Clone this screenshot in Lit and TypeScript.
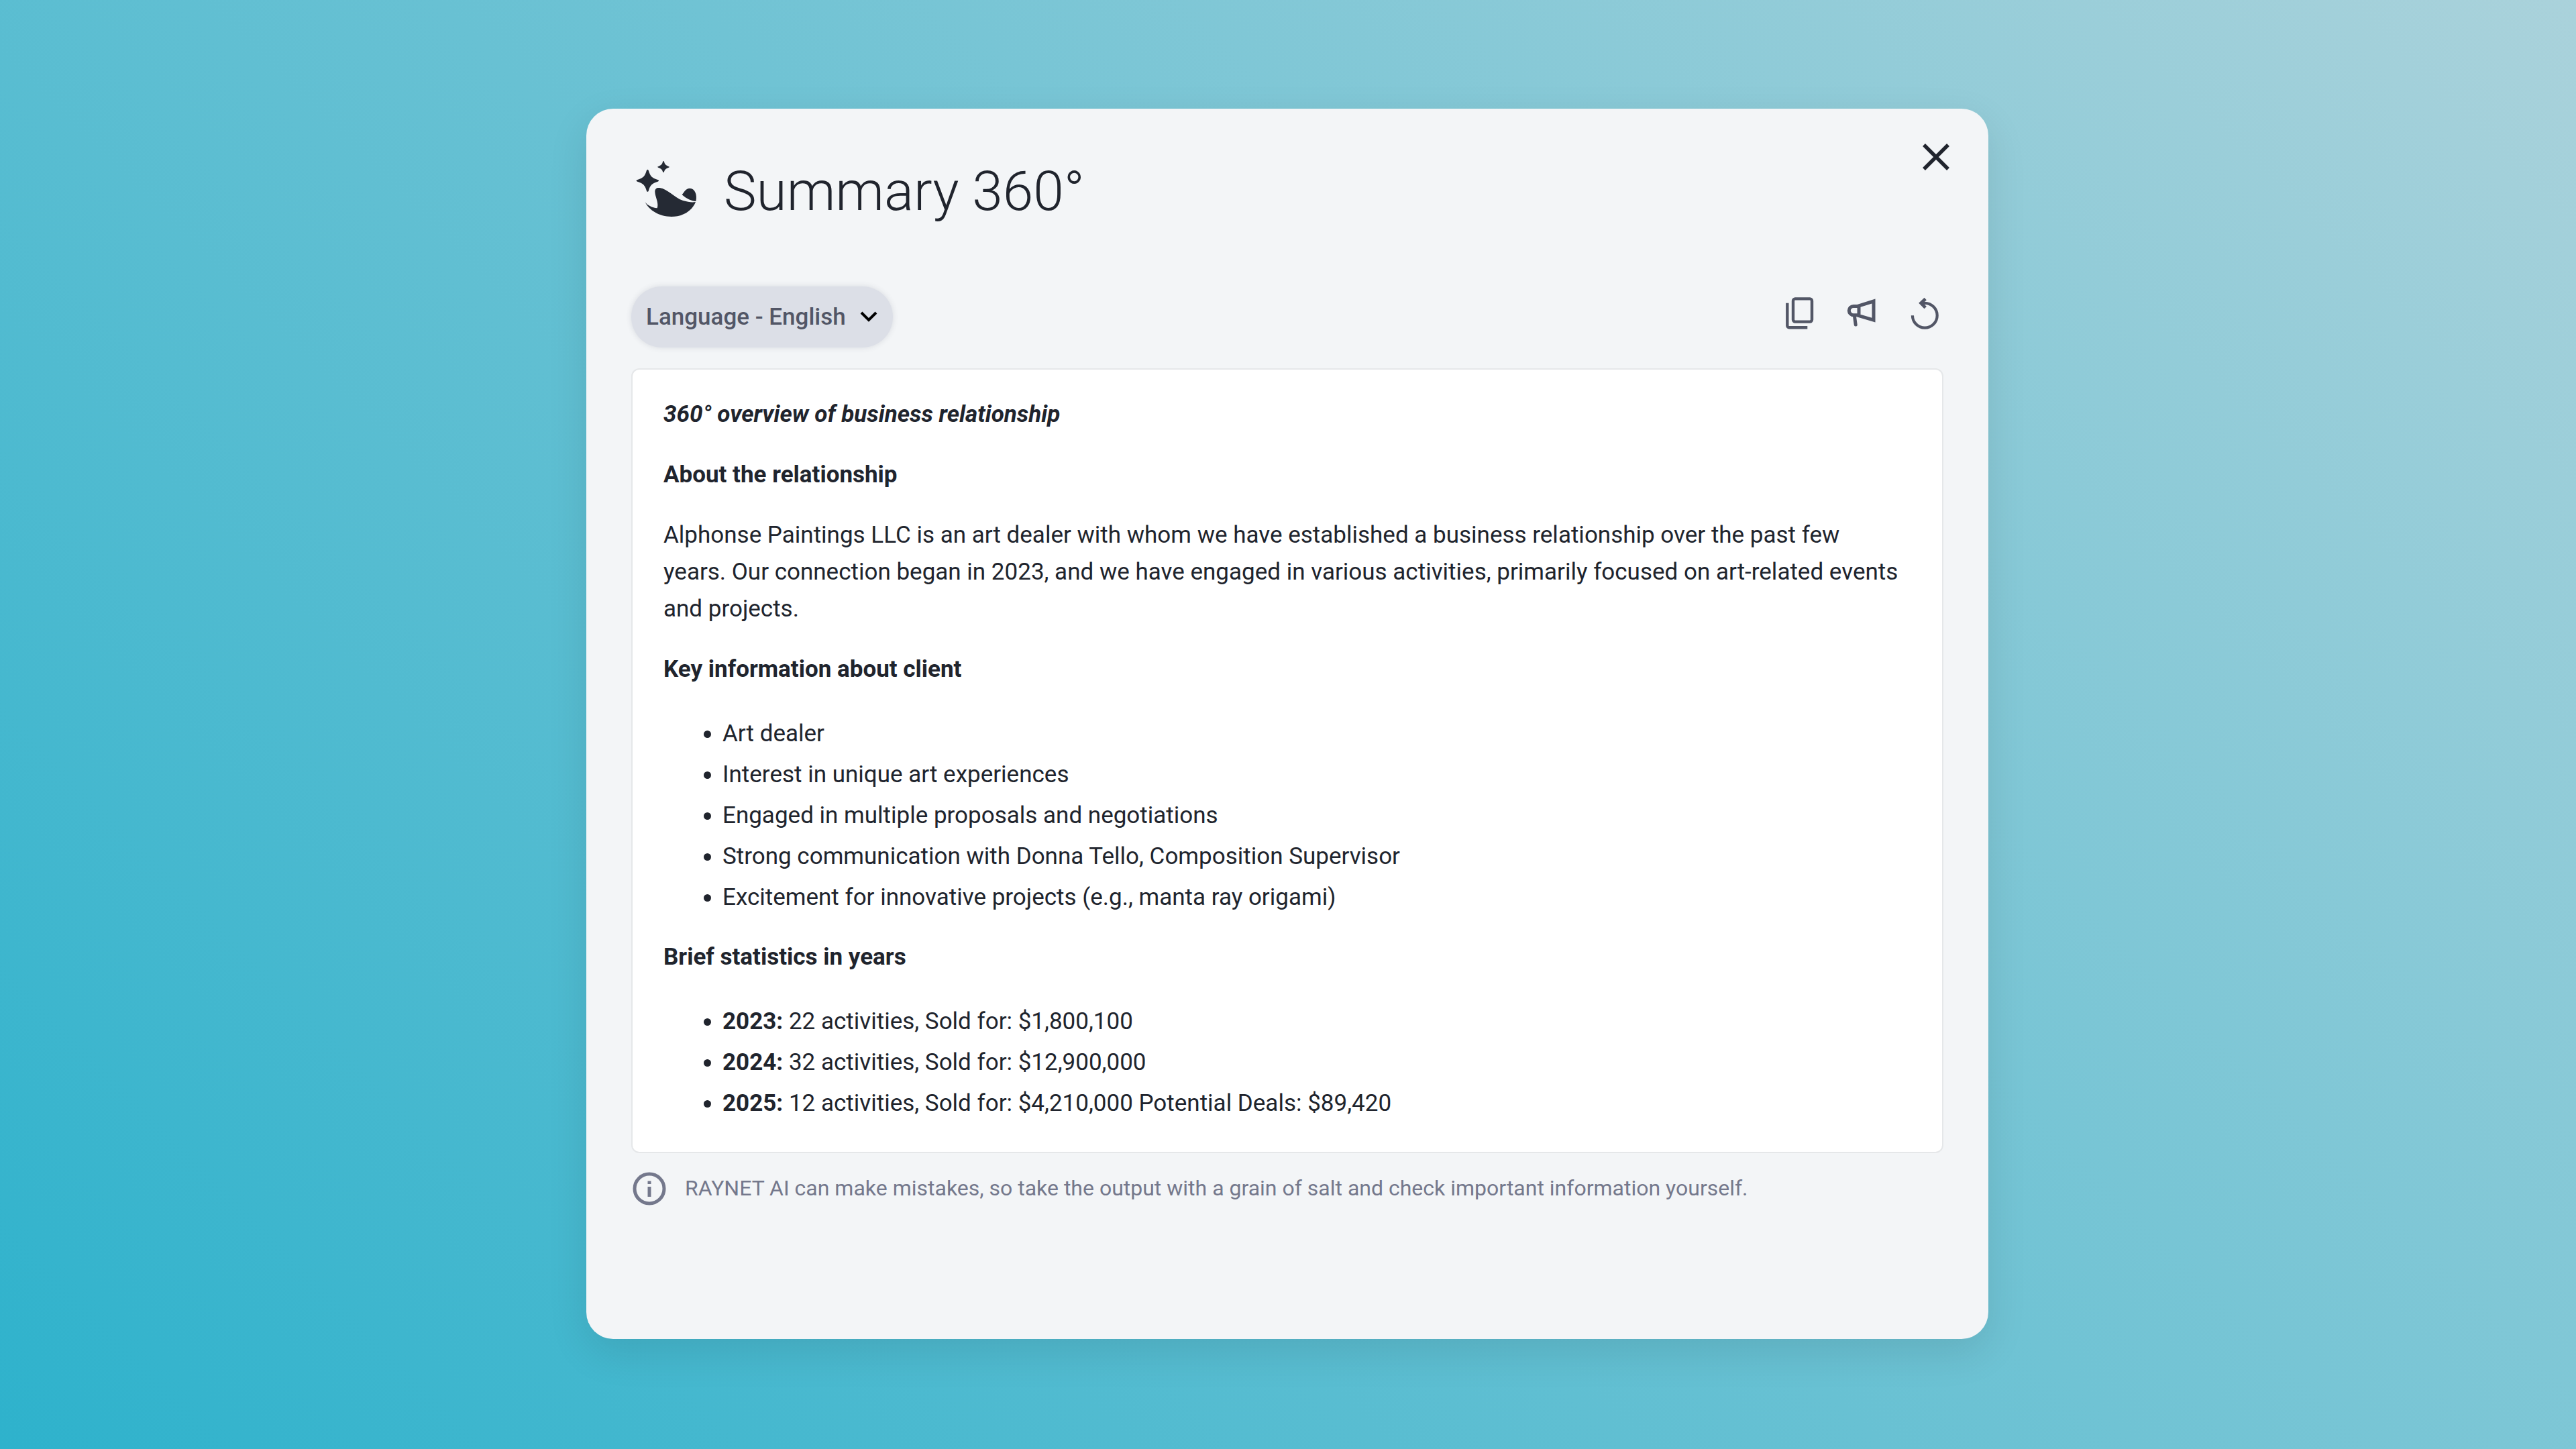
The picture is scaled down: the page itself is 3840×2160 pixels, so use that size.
import { LitElement, html, css, svg } from "lit";
import { customElement, property } from "lit/decorators.js";

const glyphs = {
  close: svg`<path d="M10 10 46 46M46 10 10 46" stroke-width="5.4" />`,
  copy: svg`<rect x="20" y="6.4" width="28" height="34.2" rx="3" stroke-width="4.4" />
    <path d="M11.3 12.7V46.6a2.6 2.6 0 0 0 2.6 2.6H41.3" stroke-width="4.4" />`,
  megaphone: svg`<path d="M46 10 V38.2 L24 31.6 V16.8 Z" stroke-width="5" />
    <path d="M24 17.4H16a6.7 6.7 0 0 0 0 13.4h8" stroke-width="5" />
    <path d="M17.4 32 19.2 45" stroke-width="5" stroke-linecap="round" />`,
  refresh: svg`<path d="M9.9 31.2A18.4 18.4 0 1 0 28.3 12.8H23" stroke-width="4.2" />
    <path d="M29.2 6.6 22.6 12.8 29.2 19.6" stroke-width="4.8" />`,
};

@customElement("icon-button")
class IconButton extends LitElement {
  @property() icon: keyof typeof glyphs = "close";
  @property() label = "";

  static styles = css`
    :host {
      display: block;
    }
    .button {
      display: block;
      padding: 0;
      border: 0;
      background: none;
      color: inherit;
      cursor: pointer;
    }
    .glyph {
      display: block;
      width: 56px;
      height: 56px;
      fill: none;
      stroke: currentColor;
    }
  `;

  render() {
    return html`<button class="button" type="button" aria-label=${this.label}>
      <svg class="glyph" viewBox="0 0 56 56" aria-hidden="true">${glyphs[this.icon]}</svg>
    </button>`;
  }
}

@customElement("app-root")
class AppRoot extends LitElement {
  private facts = [
    "Art dealer",
    "Interest in unique art experiences",
    "Engaged in multiple proposals and negotiations",
    "Strong communication with Donna Tello, Composition Supervisor",
    "Excitement for innovative projects (e.g., manta ray origami)",
  ];

  private years = [
    { year: "2023", text: "22 activities, Sold for: $1,800,100" },
    { year: "2024", text: "32 activities, Sold for: $12,900,000" },
    { year: "2025", text: "12 activities, Sold for: $4,210,000 Potential Deals: $89,420" },
  ];

  static styles = css`
    :host {
      display: flex;
      align-items: center;
      justify-content: center;
      box-sizing: border-box;
      min-height: 100vh;
      padding: 40px 42px 42px 40px;
      background: linear-gradient(45deg, #2eb2cc, #aad2db);
      font-family: Roboto, "Liberation Sans", sans-serif;
      font-size: 35px;
      line-height: 55px;
      color: #20242d;
    }
    .card {
      flex: 0 1 2090px;
      min-width: 0;
      border-radius: 40px;
      background: #f3f5f7;
      box-shadow: 0 20px 60px rgba(0, 0, 0, 0.1);
    }
    .header {
      display: flex;
      align-items: flex-start;
      justify-content: space-between;
      padding: 44px 50px 0 73px;
    }
    .brand {
      display: flex;
      align-items: flex-start;
      gap: 38px;
      padding-top: 32px;
    }
    .logo {
      flex: none;
      width: 94px;
      height: 88px;
      fill: #252a34;
    }
    .title {
      margin: 0;
      font-size: 82px;
      font-weight: 300;
      line-height: 94px;
    }
    .body {
      padding: 95px 67px 197px;
    }
    .toolbar {
      display: flex;
      align-items: flex-start;
      justify-content: space-between;
    }
    .language {
      display: grid;
      align-items: center;
      border-radius: 46px;
      background: #dcdfe7;
      box-shadow: 0 0 8px rgba(60, 66, 84, 0.14);
    }
    .language-select {
      grid-area: 1 / 1;
      height: 91px;
      padding: 0 70px 0 22px;
      border: 0;
      border-radius: 46px;
      appearance: none;
      background: none;
      font: inherit;
      font-weight: 500;
      color: #525666;
    }
    .chevron {
      grid-area: 1 / 1;
      justify-self: end;
      width: 32px;
      height: 24px;
      margin-right: 20px;
      fill: none;
      stroke: #000;
      stroke-width: 4;
      pointer-events: none;
    }
    .actions {
      display: flex;
      gap: 38px;
      padding-top: 12px;
      color: #525666;
    }
    .report {
      margin-top: 31px;
      padding: 39px 60px 45px 46px;
      border: 2px solid #e5e7e9;
      border-radius: 12px;
      background: #fff;
    }
    .heading,
    .paragraph {
      margin: 0 0 35px;
      font-size: 35px;
      font-weight: 400;
    }
    .heading {
      font-weight: 700;
    }
    .overview {
      font-style: italic;
    }
    .list {
      margin: 0 0 34px;
      padding-left: 88px;
    }
    .list:last-child {
      margin-bottom: 0;
    }
    .item {
      padding-top: 6px;
    }
    .note {
      display: flex;
      align-items: center;
      gap: 26px;
      margin: 25px 0 0;
      font-size: 32px;
      color: #74788c;
    }
    .info {
      flex: none;
      width: 54px;
      height: 54px;
      fill: none;
      stroke: currentColor;
      stroke-width: 5;
    }
  `;

  render() {
    return html`
      <main class="card" role="dialog" aria-labelledby="title">
        <header class="header">
          <div class="brand">
            <svg class="logo" viewBox="51 54 282 264" aria-hidden="true">
              <path d="M106 98c3 0 4 3 5 6 6 22 15 32 38 39 4 1 7 2 7 5s-3 4-7 5c-23 7-32 17-38 38-1 4-2 6-5 6s-4-2-5-6c-6-21-15-31-38-38-4-1-7-2-7-5s3-4 7-5c23-7 32-17 38-39 1-3 2-6 5-6z" />
              <path d="M177 60c2 0 2 2 3 4 3 11 8 16 19 20 2 1 4 1 4 3s-2 2-4 3c-11 4-16 8-19 18-1 2-1 3-3 3s-2-1-3-3c-3-10-8-14-19-18-2-1-4-1-4-3s2-2 4-3c11-4 16-9 19-20 1-2 1-4 3-4z" />
              <path d="M95 244C106 259 126 269 149 271C157 246 140 222 139 199C138 184 147 178 160 180C196 185 226 225 267 238C285 243 305 246 321 243C304 285 262 309 213 309C157 309 113 280 95 244Z" />
              <path d="M260 211C270 199 277 182 295 182C318 182 329 212 322 240C303 240 279 228 260 211Z" />
            </svg>
            <h1 class="title" id="title">Summary 360°</h1>
          </div>
          <icon-button icon="close" label="Close"></icon-button>
        </header>
        <div class="body">
          <div class="toolbar">
            <div class="language">
              <select class="language-select" aria-label="Language">
                <option>Language - English</option>
              </select>
              <svg class="chevron" viewBox="0 0 32 24" aria-hidden="true">
                <path d="M5 5 16 16 27 5" />
              </svg>
            </div>
            <div class="actions">
              <icon-button icon="copy" label="Copy"></icon-button>
              <icon-button icon="megaphone" label="Feedback"></icon-button>
              <icon-button icon="refresh" label="Regenerate"></icon-button>
            </div>
          </div>
          <article class="report">
            <h2 class="heading overview">360° overview of business relationship</h2>
            <h3 class="heading">About the relationship</h3>
            <p class="paragraph">
              Alphonse Paintings LLC is an art dealer with whom we have established a business
              relationship over the past few years. Our connection began in 2023, and we have
              engaged in various activities, primarily focused on art-related events and projects.
            </p>
            <h3 class="heading">Key information about client</h3>
            <ul class="list">
              ${this.facts.map((fact) => html`<li class="item">${fact}</li>`)}
            </ul>
            <h3 class="heading">Brief statistics in years</h3>
            <ul class="list">
              ${this.years.map(
                ({ year, text }) => html`<li class="item"><strong>${year}:</strong> ${text}</li>`
              )}
            </ul>
          </article>
          <p class="note">
            <svg class="info" viewBox="0 0 54 54" aria-hidden="true">
              <circle cx="27" cy="27" r="22" />
              <path d="M27 24V39M27 15.5V20" />
            </svg>
            RAYNET AI can make mistakes, so take the output with a grain of salt and check
            important information yourself.
          </p>
        </div>
      </main>
    `;
  }
}
